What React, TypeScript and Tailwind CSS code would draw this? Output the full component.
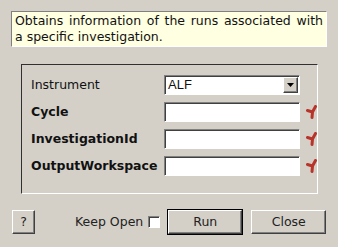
import React from 'react';

const fontStack = "font-['DejaVu_Sans',_'Liberation_Sans',_sans-serif]";

const Asterisk: React.FC = () => (
  <svg width="11" height="15" viewBox="0 0 11 15" className="shrink-0">
    <path d="M1.5 5.5 L6.5 7 M9.5 1.5 L6.5 7 L6 12.5" stroke="#b8342a" strokeWidth="3" strokeLinecap="round" strokeLinejoin="round" fill="none" />
  </svg>
);

const TextInput: React.FC = () => (
  <div className="h-[20px] w-[136px] border border-t-[#808080] border-l-[#808080] border-r-white border-b-white bg-white shadow-[inset_1px_1px_0_#404040]" />
);

const Button: React.FC<{ label: string; className?: string; isDefault?: boolean }> = ({ label, className, isDefault }) => {
  const inner = (
    <div className="flex h-full w-full items-center justify-center border border-t-white border-l-white border-r-[#404040] border-b-[#404040] bg-[#d4d0c8] text-[12.5px] text-[#222] shadow-[inset_-1px_-1px_0_#808080]">
      {label}
    </div>
  );
  if (isDefault) {
    return <div className={`border border-black ${className ?? ''}`}>{inner}</div>;
  }
  return <div className={className}>{inner}</div>;
};

const App: React.FC = () => {
  return (
    <div className={`w-[338px] h-[247px] bg-[#d4d0c8] overflow-hidden ${fontStack} text-[#111]`}>
      {/* description */}
      <div className="ml-[11px] mt-[11px] h-[36px] w-[316px] border border-t-[#808080] border-l-[#808080] border-r-white border-b-white bg-[#ffffe1] px-[3px] pt-[1px] text-[12.5px] leading-[16px] text-justify">
        Obtains information of the runs associated with a specific investigation.
      </div>

      {/* properties group */}
      <div className="ml-[21px] mt-[17px] h-[130px] w-[297px] overflow-hidden border border-t-[#303030] border-l-[#303030] border-r-white border-b-white pl-[9px] pt-[10px]">
        <div className="flex flex-col gap-[7px]">
          <div className="flex h-[20px] items-center">
            <span className="w-[133px] shrink-0 text-[12.5px]">Instrument</span>
            <div className="flex h-[20px] w-[136px] items-center border border-t-[#808080] border-l-[#808080] border-r-white border-b-white bg-white shadow-[inset_1px_1px_0_#404040]">
              <span className="flex-1 pl-[3px] text-[13px] font-['Liberation_Sans',_sans-serif]">ALF</span>
              <div className="mr-[1px] flex h-[16px] w-[15px] items-center justify-center border border-t-white border-l-white border-r-[#404040] border-b-[#404040] bg-[#d4d0c8] shadow-[inset_-1px_-1px_0_#808080]">
                <svg width="7" height="4" viewBox="0 0 7 4">
                  <path d="M0 0 H7 L3.5 4 Z" fill="#000" />
                </svg>
              </div>
            </div>
          </div>
          {['Cycle', 'InvestigationId', 'OutputWorkspace'].map((name) => (
            <div key={name} className="flex h-[20px] items-center">
              <span className="w-[133px] shrink-0 text-[12.5px] font-bold">{name}</span>
              <TextInput />
              <div className="ml-[6px]">
                <Asterisk />
              </div>
            </div>
          ))}
        </div>
      </div>

      {/* buttons */}
      <div className="mt-[15px] flex items-center pl-[12px]">
        <Button label="?" className="h-[24px] w-[23px]" />
        <span className="ml-[40px] text-[12.5px] text-[#222]">Keep Open</span>
        <div className="ml-[5px] h-[12px] w-[12px] border border-t-[#808080] border-l-[#808080] border-r-white border-b-white bg-white shadow-[inset_1px_1px_0_#404040]" />
        <Button label="Run" isDefault className="ml-[7px] h-[26px] w-[76px]" />
        <Button label="Close" className="ml-[8px] h-[24px] w-[75px]" />
      </div>
    </div>
  );
};

export default App;
